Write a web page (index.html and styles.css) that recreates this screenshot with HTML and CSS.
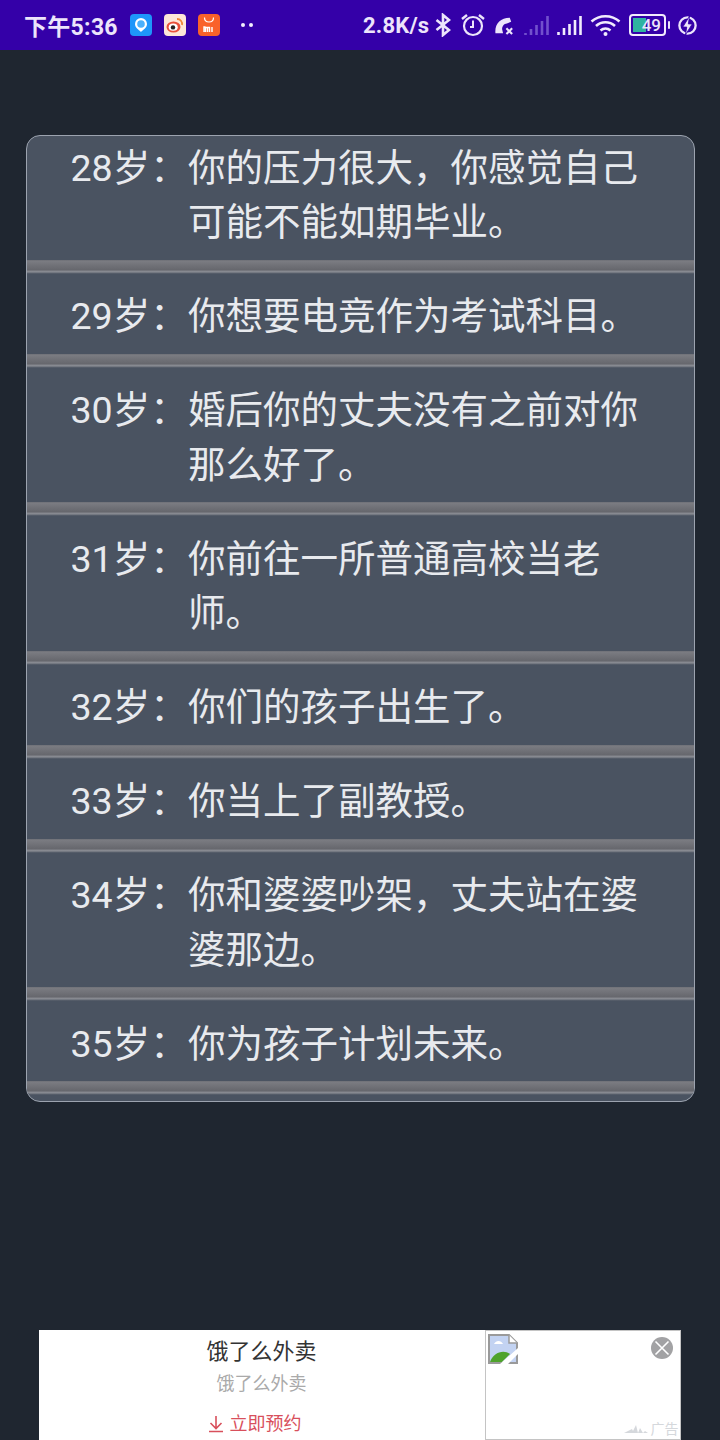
FILE: index.html
```html
<!DOCTYPE html>
<html lang="zh-CN">
<head>
<meta charset="utf-8">
<title>人生重开</title>
<link rel="stylesheet" href="styles.css">
</head>
<body>
<header class="status">
  <div class="status-left">
    <span class="time">下午5:36</span>
    <div class="apps">
      <svg class="app" viewBox="0 0 22 22"><rect width="22" height="22" rx="4" fill="#1e96fa"/><path d="M11 4a6 6 0 0 1 6 6c0 3.500-3.500 5.500-6 8-2.500-2.500-6-4.500-6-8a6 6 0 0 1 6-6z" fill="#fff"/><circle cx="11" cy="10" r="3.800" fill="#4bb0fb"/></svg>
      <svg class="app" viewBox="0 0 22 22"><rect width="22" height="22" rx="4" fill="#fde6d8"/><ellipse cx="9.500" cy="13" rx="7" ry="5.500" fill="#e8503a"/><ellipse cx="9.200" cy="13.200" rx="4.500" ry="3.600" fill="#fff"/><circle cx="9" cy="13.400" r="2.200" fill="#222"/><path d="M13 5a5 5 0 0 1 5 6" fill="none" stroke="#f0883a" stroke-width="1.800"/></svg>
      <svg class="app" viewBox="0 0 22 22"><rect width="22" height="22" rx="4" fill="#f9622a"/><path d="M6.500 3.500c0 6 9 6 9 0" fill="none" stroke="#fff" stroke-width="1.200"/><path d="M6 18v-5h1.500M7.500 13.500v4.500M7.500 13.500h2v4.500M9.500 13.500h2v4.500M14 13v5" fill="none" stroke="#fff" stroke-width="1.400"/></svg>
    </div>
    <span class="dots"><i></i><i></i></span>
  </div>
  <div class="status-right">
    <span class="speed">2.8K/s</span>
    <svg class="ico bt" viewBox="0 0 16 24"><path d="M1.500 7l12.500 10-6 5V2l6 5L1.500 17" fill="none" stroke="#ece4fb" stroke-width="2.600"/></svg>
    <svg class="ico alarm" viewBox="0 0 26 26"><circle cx="13" cy="14" r="9" fill="none" stroke="#ece4fb" stroke-width="2.200"/><path d="M13 8.500V15h-3" fill="none" stroke="#ece4fb" stroke-width="2"/><path d="M2 7l5-4M24 7l-5-4" stroke="#ece4fb" stroke-width="2.400"/></svg>
    <svg class="ico call" viewBox="0 0 22 22"><path d="M1.500 19c-1-9 5-16 15-16l1.500 4-4.500 2c-3 0-5 3-5 6l1 4z" fill="#ece4fb"/><path d="M13 14l6 6M19 14l-6 6" stroke="#ece4fb" stroke-width="2.200"/></svg>
    <svg class="ico sig dim" viewBox="0 0 25 22"><path d="M1.500 19v2M7 15v6M12.500 11v10M18 7v14M23.500 2v19" stroke="#7250cd" stroke-width="2.600"/></svg>
    <svg class="ico sig" viewBox="0 0 25 22"><path d="M1.500 18v3M7 14v7M12.500 10v11M18 6v15M23.500 2v19" stroke="#f1ebfd" stroke-width="2.600"/></svg>
    <svg class="ico wifi" viewBox="0 0 31 22"><path d="M1.500 7.500c8-7 20-7 28 0M6 12c5.500-5 13.500-5 19 0M10.500 16.500c3-2.500 7-2.500 10 0" fill="none" stroke="#f1ebfd" stroke-width="2.600"/><circle cx="15.500" cy="20" r="2" fill="#f1ebfd"/></svg>
    <div class="battery"><span class="level"></span><span class="pct">49</span></div>
    <span class="nub"></span>
    <svg class="ico bolt" viewBox="0 0 18 18"><circle cx="9" cy="9" r="7.700" fill="none" stroke="#ece4fb" stroke-width="2.200"/><path d="M11 0L4.500 10.500h3.800L7 18l6.500-10.500H9.800z" fill="#ece4fb" stroke="#3400a8" stroke-width=".8"/></svg>
  </div>
</header>

<main class="content">
  <section class="panel">
    <div class="list">
      <div class="row"><span class="age">28岁：</span><span class="event">你的压力很大，你感觉自己可能不能如期毕业。</span></div>
      <div class="row"><span class="age">29岁：</span><span class="event">你想要电竞作为考试科目。</span></div>
      <div class="row"><span class="age">30岁：</span><span class="event">婚后你的丈夫没有之前对你那么好了。</span></div>
      <div class="row"><span class="age">31岁：</span><span class="event">你前往一所普通高校当老师。</span></div>
      <div class="row"><span class="age">32岁：</span><span class="event">你们的孩子出生了。</span></div>
      <div class="row"><span class="age">33岁：</span><span class="event">你当上了副教授。</span></div>
      <div class="row"><span class="age">34岁：</span><span class="event">你和婆婆吵架，丈夫站在婆婆那边。</span></div>
      <div class="row"><span class="age">35岁：</span><span class="event">你为孩子计划未来。</span></div>
    </div>
  </section>
</main>

<aside class="ad">
  <div class="ad-copy">
    <div class="ad-title">饿了么外卖</div>
    <div class="ad-sub">饿了么外卖</div>
    <div class="ad-cta">
      <svg class="ad-arrow" viewBox="0 0 16 18"><path d="M8 1v12M2.500 8L8 13.500 13.500 8M1 16.500h14" fill="none" stroke="#d8505c" stroke-width="1.600"/></svg>
      <span>立即预约</span>
    </div>
  </div>
  <div class="ad-media">
    <svg class="broken" viewBox="0 0 30 30"><path d="M1 1h20l8 8v20H1z" fill="#c3d3f2" stroke="#9a9a9a" stroke-width="2"/><path d="M21 1v8h8" fill="#fff" stroke="#9a9a9a" stroke-width="1.500"/><path d="M6 10c2-4 7-4 9 0z" fill="#fff"/><path d="M2 28c3-9 13-13 20-8l-8 8z" fill="#4fa32c"/><path d="M12 30L30 14v6L20 30z" fill="#fff"/></svg>
    <svg class="close" viewBox="0 0 22 22"><circle cx="11" cy="11" r="11" fill="#a2a2a4"/><path d="M4.500 4.500l13 13M17.500 4.500l-13 13" stroke="#fff" stroke-width="1.600"/></svg>
    <div class="ad-mark">
      <svg class="mark-logo" viewBox="0 0 26 10"><path d="M0 9l8-4 2 4zM8 9l4-8 2 8zM14 9l2-5 3 5zM19 9l2-2 3 2z" fill="#d5d8dc"/></svg>
      <span>广告</span>
    </div>
  </div>
</aside>
</body>
</html>
```
FILE: styles.css
```css
* { box-sizing: border-box; }
html, body { margin: 0; height: 100%; }
body {
  width: 720px;
  height: 1440px;
  overflow: hidden;
  display: flex;
  flex-direction: column;
  background: #1f2630;
  font-family: Roboto, "Noto Sans CJK SC", sans-serif;
}

/* status bar */
.status {
  flex: none;
  height: 50px;
  padding: 0 23px 0 24px;
  display: flex;
  align-items: center;
  justify-content: space-between;
  background: #3400a8;
  color: #ece4fb;
}
.status-left, .status-right { display: flex; align-items: center; }
.time { width: 106px; font-size: 23px; font-weight: 700; letter-spacing: .3px; white-space: nowrap; }
.apps { display: flex; gap: 12px; }
.app { width: 22px; height: 22px; display: block; }
.dots { display: flex; gap: 4px; margin-left: 21px; }
.dots i { width: 4px; height: 4px; border-radius: 50%; background: #f4effe; }
.speed { font-size: 22px; font-weight: 700; letter-spacing: .2px; width: 72px; white-space: nowrap; }
.ico { display: block; flex: none; }
.bt { width: 16px; height: 24px; margin-right: 9px; }
.alarm { width: 26px; height: 26px; margin-right: 8px; }
.call { width: 21px; height: 21px; margin-right: 9px; }
.sig { width: 25px; height: 22px; margin-right: 8px; }
.wifi { width: 31px; height: 22px; margin-right: 8px; }
.battery {
  position: relative;
  width: 37px;
  height: 22px;
  border: 2px solid #f1ebfd;
  border-radius: 4px;
  font-size: 17px;
  font-weight: 500;
  line-height: 18px;
  text-align: right;
  padding-right: 3px;
  color: #ece4fb;
}
.level { position: absolute; left: 2px; top: 2px; bottom: 2px; width: 13px; background: #2fb3a0; }
.pct { position: relative; }
.nub { width: 2px; height: 8px; margin: 0 8px 0 2px; background: #ece4fb; border-radius: 1px; }
.bolt { width: 19px; height: 19px; }

/* life list */
.content { flex: 1; min-height: 0; padding: 85px 25px 0 26px; }
.panel {
  height: 967px;
  overflow: hidden;
  border: 1px solid #9ca3af;
  border-radius: 14px;
  background: #4a5361;
}
.list { margin-top: -11px; }
.row {
  display: flex;
  padding: 15.500px 44px 24.200px 43.500px;
  font-size: 37.500px;
  line-height: 54.400px;
  color: #e8eaee;
  background: linear-gradient(#6a6c73, #7b7c82 1px, #6f7076 6px, #66676d 10px, #84868d 11px, #8a8d94 12px, #5f6570 13px, #4a5361) bottom / 100% 14px no-repeat;
}
.age { flex: none; width: 117.500px; white-space: nowrap; }
.event { flex: 1; min-width: 0; }

/* advert */
.ad {
  flex: none;
  align-self: center;
  margin-left: -1px;
  width: 642px;
  height: 110px;
  display: flex;
  background: #fff;
}
.ad-copy { flex: none; width: 446px; text-align: center; }
.ad-title { font-size: 22px; line-height: 30px; margin-top: 7px; color: #333; }
.ad-sub { font-size: 18px; line-height: 26px; margin-top: 4px; color: #aaa; }
.ad-cta {
  margin-top: 14px;
  padding-right: 14px;
  display: flex;
  justify-content: center;
  align-items: center;
  gap: 6px;
  font-size: 18px;
  line-height: 26px;
  color: #d8505c;
}
.ad-arrow { width: 16px; height: 18px; }
.ad-media { position: relative; flex: 1; border: 1px solid #c4c4c4; }
.broken { position: absolute; left: 2px; top: 3px; width: 30px; height: 30px; }
.close { position: absolute; right: 7px; top: 6px; width: 22px; height: 22px; }
.ad-mark {
  position: absolute;
  right: 1px;
  bottom: 1px;
  display: flex;
  align-items: center;
  gap: 1px;
  font-size: 14px;
  line-height: 18px;
  color: #d5d8dc;
}
.mark-logo { width: 26px; height: 10px; }
```
